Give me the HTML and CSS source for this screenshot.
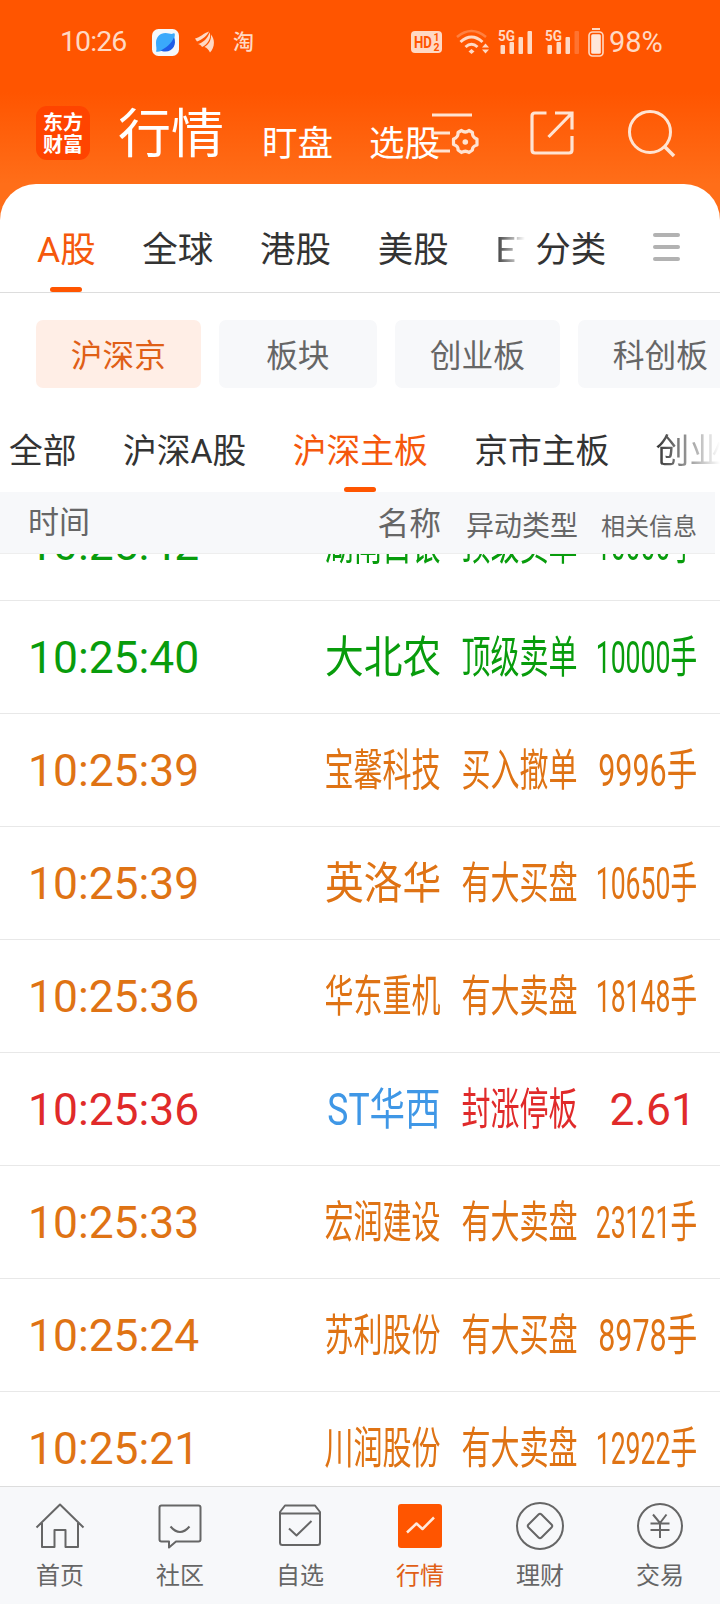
FILE: index.html
```html
<!DOCTYPE html>
<html lang="zh-CN">
<head>
    <meta charset="UTF-8">
    <meta name="viewport" content="width=device-width, initial-scale=1.0">
    <title>行情</title>
    <link rel="stylesheet" href="styles.css">
</head>
<body>

<div class="app">
    <header class="header">
        <div class="status-bar">
            <span class="clock">10:26</span>
            <svg class="st-browser" width="27" height="27" viewBox="0 0 27 27">
                <rect width="27" height="27" rx="6.5" fill="#f5f8fb"/>
                <path d="M4 22.500C5 20 4 18 4 14C4 8 8 4 13.500 4C16 4 18 5 19.500 5C21 5 22 4 22.500 4.500C23.500 6 22 8 22.500 11C21 14 18 17 14 19.500C10 22 6 23.500 4 22.500Z" fill="#3aa9fb"/>
                <path d="M22 8.500C25 15 21 22.500 13.500 22.500C11 22.500 9.500 22 8.500 21.500C14 19 19 15 22 8.500Z" fill="#1d5de8"/>
            </svg>
            <svg class="st-leaf" width="20" height="22" viewBox="0 0 20 22" fill="#ffd9c4">
                <path d="M0 7.500C5 6.500 9 2 14 .5C13 4 7 9 2 10.500Z"/>
                <path d="M3 13C8 12 13 7 14.500 1.500C17 6 12.500 14 7 16C6.500 14.500 5 13.500 3 13Z"/>
                <path d="M9.500 16C13.500 13.500 16.500 9 16 3.500C20.500 9 19.500 17 15 21.500C13.500 18.500 12 17 9.500 16Z"/>
            </svg>
            <span class="st-tao">淘</span>
            <div class="status-right">
                <svg class="st-hd" width="31" height="22" viewBox="0 0 31 22">
                    <rect width="31" height="22" rx="4" fill="#ffd9c4"/>
                    <text x="3" y="16.800" font-size="17" font-weight="700" textLength="18" lengthAdjust="spacingAndGlyphs">HD</text>
                    <text x="22.500" y="10.200" font-size="10.500" font-weight="700">1</text>
                    <text x="22.500" y="19.500" font-size="10.500" font-weight="700">2</text>
                </svg>
                <svg class="st-wifi" width="34" height="26" viewBox="0 0 34 26" fill="none" stroke="#ffd9c4" stroke-width="3">
                    <path d="M1 8Q15.500 -4 30 8" stroke="#ff8040" stroke-width="2.500"/>
                    <path d="M4.500 13Q15.500 3 26.500 13"/>
                    <path d="M9.500 18Q15.500 12.500 21.500 18"/>
                    <path d="M15.500 20l3 2.500l-3 2.500l-3-2.500z" fill="#ffd9c4" stroke="none"/>
                    <path d="M26 18.500l3.500-4l3.500 4zM26 20.500l3.500 4l3.500-4z" fill="#ffd9c4" stroke="none"/>
                </svg>
                <svg class="st-signal" width="36" height="26" viewBox="0 0 36 26" fill="#ffd9c4">
                    <text x="0" y="12" font-size="15" font-weight="700" textLength="17" lengthAdjust="spacingAndGlyphs">5G</text>
                    <rect x="2.500" y="16" width="4.500" height="9" rx="1"/>
                    <rect x="11.500" y="13" width="4.500" height="12" rx="1"/>
                    <rect x="20.500" y="8" width="4.500" height="17" rx="1"/>
                    <rect x="29.500" y="2" width="4.500" height="23" rx="1"/>
                </svg>
                <svg class="st-signal" width="36" height="26" viewBox="0 0 36 26" fill="#ffd9c4">
                    <text x="0" y="12" font-size="15" font-weight="700" textLength="17" lengthAdjust="spacingAndGlyphs">5G</text>
                    <rect x="2.500" y="16" width="4.500" height="9" rx="1"/>
                    <rect x="11.500" y="13" width="4.500" height="12" rx="1"/>
                    <rect x="20.500" y="8" width="4.500" height="17" rx="1"/>
                    <rect x="29.500" y="2" width="4.500" height="23" rx="1" fill="#ff7330"/>
                </svg>
                <svg class="st-battery" width="16" height="29" viewBox="0 0 16 29">
                    <rect x="4" y="0" width="8" height="2" fill="#ffd9c4"/>
                    <rect x="1" y="4" width="14" height="24" rx="3.500" fill="none" stroke="#ffd9c4" stroke-width="1.600"/>
                    <rect x="3.200" y="6.200" width="9.600" height="19.600" rx="1.500" fill="#ffe6d9"/>
                </svg>
                <span class="percent">98%</span>
            </div>
        </div>

        <div class="title-bar">
            <div class="logo">东方<br>财富</div>
            <span class="title">行情</span>
            <span class="title-link">盯盘</span>
            <span class="title-link">选股</span>
            <svg class="ic-settings" width="48" height="44" viewBox="0 0 48 44" fill="none" stroke="#ffe3d2" stroke-width="3.200">
                <path d="M1 3H41M1 21H19M1 39H19"/>
                <path d="M30.500 18.500Q34.300 21.500 38 18.500L41.500 20.500Q41 25.500 46 27V33Q41 34.500 41.500 38L38 40.500Q34.300 38 30.500 40.500L27 38Q27.500 34 22.500 32.500V27Q27.500 25.500 27 20.500Z" stroke-linejoin="round"/>
                <circle cx="34.300" cy="30" r="2.800" fill="#ffe3d2" stroke="none"/>
            </svg>
            <svg class="ic-share" width="44" height="44" viewBox="0 0 44 44" fill="none" stroke="#ffe3d2" stroke-width="3.200">
                <path d="M16.500 2H5Q2 2 2 5V39Q2 42 5 42H39Q42 42 42 39V25"/>
                <path d="M25 2H42V18.500M42 2L18.500 26"/>
            </svg>
            <svg class="ic-search" width="48" height="48" viewBox="0 0 48 48" fill="none" stroke="#ffe3d2" stroke-width="3">
                <circle cx="22" cy="22" r="20.500"/>
                <path d="M36 36L46 46" stroke-width="3.500"/>
            </svg>
        </div>
    </header>

    <div class="card">
        <nav class="tabs">
            <span class="tab active">A股</span>
            <span class="tab">全球</span>
            <span class="tab">港股</span>
            <span class="tab">美股</span>
            <span class="tab tab-fade">ETF</span>
            <span class="tab-category">分类</span>
            <span class="menu"><i></i><i></i><i></i></span>
        </nav>

        <div class="pills">
            <span class="pill active">沪深京</span>
            <span class="pill pill-short">板块</span>
            <span class="pill">创业板</span>
            <span class="pill">科创板</span>
        </div>

        <nav class="subtabs">
            <span class="subtab">全部</span>
            <span class="subtab">沪深A股</span>
            <span class="subtab active">沪深主板</span>
            <span class="subtab">京市主板</span>
            <span class="subtab subtab-fade">创业板</span>
        </nav>
    </div>

    <div class="row table-head">
        <span class="time">时间</span>
        <span class="name">名称</span>
        <span class="type">异动类型</span>
        <span class="info">相关信息</span>
    </div>

    <main class="list">
        <div class="row sell">
            <span class="time">10:25:42</span>
            <span class="name"><b class="n4">湖南白银</b></span>
            <span class="type"><b class="n4">顶级卖单</b></span>
            <span class="info"><b class="d5">10000手</b></span>
        </div>
        <div class="row sell">
            <span class="time">10:25:40</span>
            <span class="name"><b class="n3">大北农</b></span>
            <span class="type"><b class="n4">顶级卖单</b></span>
            <span class="info"><b class="d5">10000手</b></span>
        </div>
        <div class="row big">
            <span class="time">10:25:39</span>
            <span class="name"><b class="n4">宝馨科技</b></span>
            <span class="type"><b class="n4">买入撤单</b></span>
            <span class="info"><b class="d4">9996手</b></span>
        </div>
        <div class="row big">
            <span class="time">10:25:39</span>
            <span class="name"><b class="n3">英洛华</b></span>
            <span class="type"><b class="n4">有大买盘</b></span>
            <span class="info"><b class="d5">10650手</b></span>
        </div>
        <div class="row big">
            <span class="time">10:25:36</span>
            <span class="name"><b class="n4">华东重机</b></span>
            <span class="type"><b class="n4">有大卖盘</b></span>
            <span class="info"><b class="d5">18148手</b></span>
        </div>
        <div class="row limit">
            <span class="time">10:25:36</span>
            <span class="name held"><b class="st">ST华西</b></span>
            <span class="type"><b class="n4">封涨停板</b></span>
            <span class="info price">2.61</span>
        </div>
        <div class="row big">
            <span class="time">10:25:33</span>
            <span class="name"><b class="n4">宏润建设</b></span>
            <span class="type"><b class="n4">有大卖盘</b></span>
            <span class="info"><b class="d5">23121手</b></span>
        </div>
        <div class="row big">
            <span class="time">10:25:24</span>
            <span class="name"><b class="n4">苏利股份</b></span>
            <span class="type"><b class="n4">有大买盘</b></span>
            <span class="info"><b class="d4">8978手</b></span>
        </div>
        <div class="row big">
            <span class="time">10:25:21</span>
            <span class="name"><b class="n4">川润股份</b></span>
            <span class="type"><b class="n4">有大卖盘</b></span>
            <span class="info"><b class="d5">12922手</b></span>
        </div>
    </main>

    <footer class="bottom-nav">
        <div class="nav-item">
            <svg width="50" height="50" viewBox="0 0 50 50">
                <path d="M1.500 26.500L25 3.500L48.500 26.500M7 22V46H19.500V29H30.500V46H43V22"/>
            </svg>
            <span>首页</span>
        </div>
        <div class="nav-item">
            <svg width="50" height="50" viewBox="0 0 50 50">
                <path d="M6.500 4.500H43.500Q45.500 4.500 45.500 6.500V38.500Q45.500 40.500 43.500 40.500H21L14 46.500V40.500H6.500Q4.500 40.500 4.500 38.500V6.500Q4.500 4.500 6.500 4.500Z"/>
                <path d="M15.500 25.500Q25 36.500 34.500 25.500"/>
            </svg>
            <span>社区</span>
        </div>
        <div class="nav-item">
            <svg width="50" height="50" viewBox="0 0 50 50">
                <path d="M5 11L10 4.500H40L45 11V41.500Q45 44 42.500 44H7.500Q5 44 5 41.500ZM5 12.500H45"/>
                <path d="M14 27.500L21.500 34.500L36.500 20"/>
            </svg>
            <span>自选</span>
        </div>
        <div class="nav-item active">
            <svg width="50" height="50" viewBox="0 0 50 50">
                <rect class="nav-fill" x="3" y="3" width="44" height="44" rx="3"/>
                <path class="nav-line" d="M12 31.500L21.500 22.500L27.500 28L39 16.500"/>
            </svg>
            <span>行情</span>
        </div>
        <div class="nav-item">
            <svg width="50" height="50" viewBox="0 0 50 50">
                <circle cx="25" cy="25" r="23"/>
                <path d="M23.500 13.500Q25 12 26.500 13.500L36.500 23.500Q38 25 36.500 26.500L26.500 36.500Q25 38 23.500 36.500L13.500 26.500Q12 25 13.500 23.500Z"/>
            </svg>
            <span>理财</span>
        </div>
        <div class="nav-item">
            <svg width="50" height="50" viewBox="0 0 50 50">
                <circle cx="25" cy="25" r="22"/>
                <path d="M18 13.500L25 22L31.500 13.500M15.500 22.500H34.500M15.500 29H34.500M25 22V37"/>
            </svg>
            <span>交易</span>
        </div>
    </footer>
</div>

</body>
</html>
```
FILE: styles.css
```css
* {
    box-sizing: border-box;
}
body {
    margin: 0;
    font-family: Roboto, "Noto Sans CJK SC", sans-serif;
    background-color: #fff;
    color: #333;
}
svg {
    display: block;
    flex-shrink: 0;
}
.app {
    width: 720px;
    height: 1604px;
    display: flex;
    flex-direction: column;
    overflow: hidden;
}

/* header */
.header {
    height: 222px;
    flex-shrink: 0;
    background: linear-gradient(#ff5500 0, #ff5500 92px, #ff6e19 184px);
}
.status-bar {
    height: 84px;
    padding: 0 55px 0 60px;
    display: flex;
    align-items: center;
    color: #ffd9c4;
}
.clock {
    width: 92px;
    font-size: 28.5px;
    line-height: 86px;
    letter-spacing: -0.9px;
}
.st-leaf {
    margin-left: 16px;
}
.st-tao {
    margin-left: 18px;
    font-size: 21px;
    font-weight: 500;
    line-height: 82px;
}
.status-right {
    margin-left: auto;
    display: flex;
    align-items: center;
}
.st-hd text {
    fill: #ff5500;
}
.st-wifi {
    margin-left: 14px;
}
.st-signal {
    margin-left: 8px;
    overflow: visible;
}
.st-signal + .st-signal {
    margin-left: 11px;
}
.st-battery {
    margin-left: 7px;
}
.percent {
    margin-left: 5px;
    width: 56px;
    font-size: 29px;
    line-height: 86px;
    white-space: nowrap;
}
.title-bar {
    height: 100px;
    padding-left: 36px;
    display: flex;
    align-items: center;
    color: #fff;
}
.logo {
    width: 54px;
    height: 54px;
    margin-top: -2px;
    padding-top: 5px;
    border-radius: 11px;
    background-color: #ff4400;
    font-family: "Noto Sans CJK SC", sans-serif;
    font-size: 20px;
    font-weight: bold;
    line-height: 22px;
    text-align: center;
}
.title {
    margin: 0 38px 0 28px;
    padding-top: 2px;
    font-size: 53px;
    line-height: 98px;
}
.title-link {
    margin-right: 36px;
    padding-top: 19px;
    font-size: 35.5px;
    line-height: 80px;
}
.ic-settings {
    margin-left: -45px;
}
.ic-share {
    margin: -2px 0 0 51px;
}
.ic-search {
    margin: -1px 0 0 54px;
}

/* tabs */
.card {
    height: 308px;
    margin-top: -38px;
    flex-shrink: 0;
    background-color: #fff;
    border-radius: 36px 36px 0 0;
}
.tabs {
    height: 109px;
    padding-left: 37px;
    display: flex;
    align-items: flex-end;
    gap: 46.7px;
    font-size: 35.5px;
    line-height: 86px;
    border-bottom: 1px solid #ddd;
    white-space: nowrap;
}
.tab {
    height: 84px;
    margin-bottom: 1px;
}
.tab.active,
.subtab.active {
    position: relative;
    color: #f5580c;
}
.tab.active::after,
.subtab.active::after {
    content: "";
    position: absolute;
    left: 50%;
    bottom: -1px;
    width: 32px;
    height: 5px;
    margin-left: -16px;
    border-radius: 3px;
    background-color: #ff5500;
}
.tab-fade {
    width: 30px;
    overflow: hidden;
    -webkit-mask-image: linear-gradient(90deg, #000, transparent);
    mask-image: linear-gradient(90deg, #000, transparent);
}
.tab-category {
    height: 84px;
    margin: 0 0 1px -37px;
}
.menu {
    display: flex;
    flex-direction: column;
    gap: 8px;
    margin-bottom: 31px;
}
.menu i {
    width: 27px;
    height: 4px;
    border-radius: 2px;
    background-color: #b2b2b2;
}
.pills {
    display: flex;
    gap: 18.3px;
    padding: 27px 0 0 36px;
    overflow: hidden;
}
.pill {
    width: 164.7px;
    height: 68px;
    flex-shrink: 0;
    border-radius: 7px;
    background-color: #f7f8fa;
    color: #666;
    font-size: 31.7px;
    line-height: 73px;
    text-align: center;
}
.pill-short {
    width: 157.7px;
}
.pill.active {
    background-color: #ffeee6;
    color: #e05f17;
}
.subtabs {
    height: 104px;
    padding-left: 9px;
    display: flex;
    gap: 46.3px;
    overflow: hidden;
    font-size: 33.8px;
    line-height: 128px;
    white-space: nowrap;
}
.subtab {
    height: 104px;
}
.subtab.active::after {
    bottom: 0;
}
.subtab-fade {
    -webkit-mask-image: linear-gradient(90deg, #000, transparent 64px);
    mask-image: linear-gradient(90deg, #000, transparent 64px);
}

/* table */
.row {
    height: 113px;
    padding-left: 28px;
    display: grid;
    grid-template-columns: 180px 233px 137px 119px;
    align-items: center;
    border-bottom: 1px solid #e8e8e8;
    font-size: 44.4px;
    line-height: 112px;
    white-space: nowrap;
}
.name,
.type,
.info {
    display: flex;
    justify-content: flex-end;
}
.row b {
    padding-top: 1px;
    font-weight: normal;
    transform-origin: right center;
}
.n3 { transform: scaleX(0.872); }
.n4 { transform: scaleX(0.654); }
.st { transform: scaleX(0.8); }
.d5 { transform: scaleX(0.6); }
.d4 { transform: scaleX(0.687); }
.price {
    padding-right: 1px;
}
.table-head {
    width: 715px;
    height: 62px;
    flex-shrink: 0;
    background-color: #f7f8fa;
    border-bottom: 1px solid #eee;
    color: #666;
    line-height: 61px;
    align-items: start;
}
.table-head .time {
    font-size: 31px;
}
.table-head .name {
    padding-top: 2px;
    font-size: 31.8px;
}
.table-head .type {
    padding-top: 4px;
    font-size: 28px;
}
.table-head .info {
    padding-top: 5px;
    font-size: 24px;
}
.sell {
    color: #089c0c;
}
.big {
    color: #df7314;
}
.limit {
    color: #e02a2a;
}
.held {
    color: #3f97e6;
}
.list {
    flex: 1;
    min-height: 0;
    overflow: hidden;
}
.list .row:first-child {
    margin-top: -66px;
}

/* bottom nav */
.bottom-nav {
    height: 118px;
    flex-shrink: 0;
    display: grid;
    grid-template-columns: repeat(6, 1fr);
    background-color: #f7f8fa;
    border-top: 1px solid #ddd;
}
.nav-item {
    display: flex;
    flex-direction: column;
    align-items: center;
    padding-top: 14px;
    color: #666;
    font-size: 24px;
    line-height: 51px;
}
.nav-item svg {
    fill: none;
    stroke: #666;
    stroke-width: 2;
    stroke-linejoin: round;
}
.nav-item.active {
    color: #e05f17;
}
.nav-item .nav-fill {
    fill: #ff5500;
    stroke: none;
}
.nav-item .nav-line {
    stroke: #ffe9dc;
    stroke-width: 2.5;
}
```
